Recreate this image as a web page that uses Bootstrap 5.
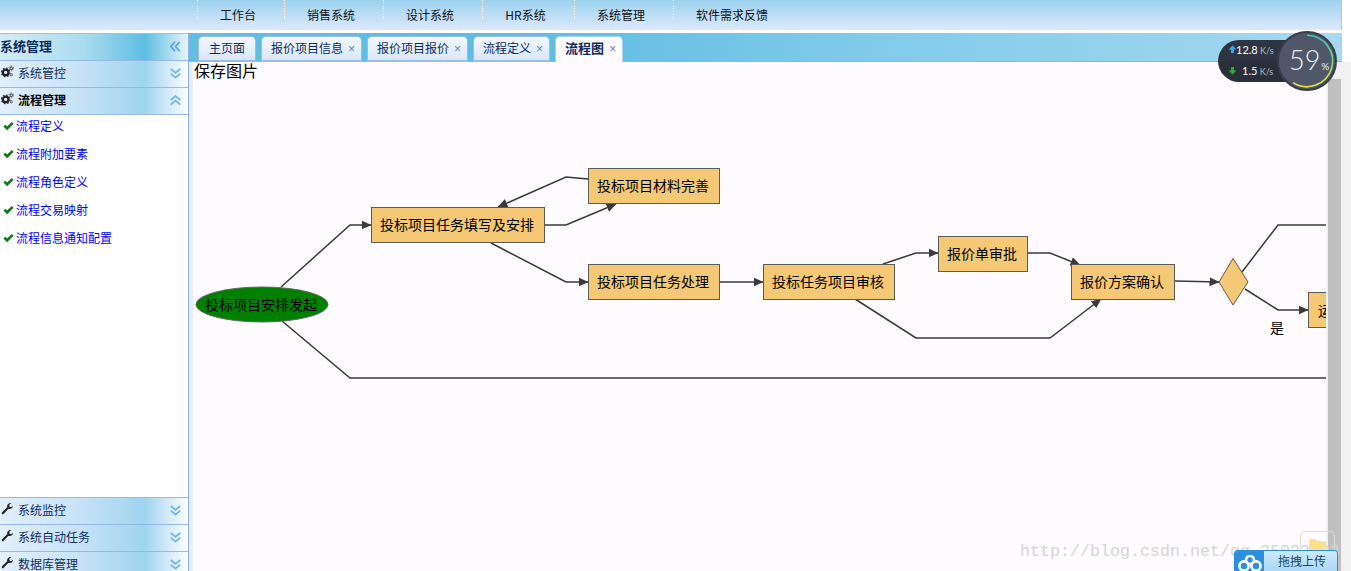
<!DOCTYPE html>
<html lang="zh">
<head>
<meta charset="utf-8">
<title>流程图</title>
<link href="https://cdn.jsdelivr.net/npm/bootstrap@5.3.0/dist/css/bootstrap.min.css" rel="stylesheet">
<style>
html,body{height:571px;overflow:hidden;background:#fff;margin:0}
body{position:relative;font-family:"Noto Sans CJK SC","Liberation Sans",sans-serif;font-size:12px;color:#0e2d5f}
.top-bar{width:1342px;height:30px;background:linear-gradient(#9cd2ef,#dce9fb);border-right:1px solid #a8c8ec;margin-bottom:3px;padding-left:197px}
.top-item{height:30px;color:#111;font-size:12px;line-height:30px;text-align:center;position:relative;padding-right:5px}
.top-item::before{content:"";position:absolute;left:0;top:0;height:19px;border-left:1px dotted #fff}
.shell{height:545px}
.side{width:189px;flex:none;border-right:1px solid #8db2e3;background:#fff}
.side-title{height:27px;padding-bottom:2px;font-weight:700;font-size:13px;color:#0e2d5f;background:linear-gradient(90deg,#d3ecf6 0,#a9dcef 45%,#5fbde2 77%,#a9dcef 90%,#e9f5fb 100%);border-top:1px solid #9dbfe9}
.side-head{height:27px;flex:none;padding-left:1px;padding-bottom:2px;color:#0e2d5f;background:linear-gradient(90deg,#e3effc 0,#c5e1f6 45%,#9fd4ee 77%,#d5ebf8 90%,#fbfdff 100%);border-top:1px solid #97b9e8;gap:4px}
.side-head.is-open{color:#000;font-weight:700;border-bottom:1px solid #97b9e8;height:28px}
.chev{margin-left:auto;margin-right:7px;flex:none}
.side-list{flex:1 1 auto;min-height:0;margin-top:-2px}
.side-list .list-group-item{border:0;padding:0 0 2px 3px;height:28px;color:#0000ff;background:transparent;font-size:12px;gap:2px}
.main-col{flex:1 1 auto;min-width:0;width:1153px}
.tab-strip{height:29px;padding-left:9px;padding-top:3px;gap:5px;background:linear-gradient(90deg,#62bde2 0,#5fbde2 30%,#82cbea 60%,#a6d8f1 100%);border-bottom:1px solid #8db2e3;flex-wrap:nowrap}
.tab-strip .nav-link{height:26px;padding:0 6px 0 9px;font-size:12px;line-height:22px;color:#0e2d5f;background:linear-gradient(#f4f8fe,#d9e7fa);border:1px solid #9bbce9;border-bottom-width:2px;border-radius:5px 5px 0 0;white-space:nowrap}
.tab-strip .nav-link.active{background:#fdfbfd;font-weight:700;font-size:13px;border-color:#a8d3ee;border-bottom:0;height:27px}
.tab-strip .nav-link.plain{padding:0 10px}
.tab-x{font-weight:400;color:#6480c0;margin-left:5px;font-family:"Liberation Sans",sans-serif;font-size:12px}
.gutter{width:4px;flex:none;background:#e6eff9}
.canvas-pane{width:1133px;flex:none;height:516px;background:#fdfbfd}
.save-line{height:18px;font-size:16px;line-height:16px;color:#000;padding-left:1px;white-space:nowrap}
.canvas-pane svg{display:block}
.node{fill:#f4c875;stroke:#5c5c50;stroke-width:1}
.edge{fill:none;stroke:#3a3a3a;stroke-width:1.5}
.ntext{font-size:14px;fill:#000;text-anchor:middle;font-family:"Noto Sans CJK SC",sans-serif}
.scroll-track{width:16px;flex:none;background:#f1f1f1;padding:17px 1px 0 2px;height:516px}
.scroll-thumb{height:100%;background:#c0c0c0}
.right-rest{width:9px;flex:none;background:#f1f1f1;height:516px}
.meter{position:absolute;left:1218px;top:31px;width:120px;height:60px}
.meter-pill{position:absolute;left:0;top:9px;width:90px;height:42px;border-radius:21px;background:linear-gradient(#2f3442 0,#2f3442 50%,#2a2e3a 50%,#2a2e3a 100%);color:#fff;font-family:"Lato",sans-serif;font-size:11px}
.meter-row{position:absolute;white-space:nowrap;line-height:14px}
.meter-row small{font-size:9px;color:#b5bac4}
.meter-pct{position:absolute;left:71px;top:12px;font-family:"Lato",sans-serif;font-weight:300;color:#eef0f4;font-size:27px;line-height:34px}
.meter-pct small{font-size:10px;font-weight:400;margin-left:1px}
.watermark{position:absolute;left:1020px;top:542px;font-family:"Liberation Mono",monospace;font-size:16.67px;line-height:20px;color:#d9d5d1;white-space:nowrap}
.folder-box{position:absolute;left:1300px;top:531px;width:35px;height:30px;border:1px solid #dcdcdc;border-radius:5px}
.upload{position:absolute;left:1234px;top:550px;width:104px;height:24px;border-radius:3px 3px 0 0;border:1px solid #2b8fdc;background:linear-gradient(#cfe9fb,#a6d6f5);overflow:hidden}
.upload-ic{width:29px;background:#2b8fdc;flex:none}
.upload-txt{font-size:12px;line-height:20px;color:#17466e;padding-left:14px}
</style>
</head>
<body>
<nav class="top-bar d-flex">
  <div class="top-item" style="width:87px">工作台</div>
  <div class="top-item" style="width:99px">销售系统</div>
  <div class="top-item" style="width:99px">设计系统</div>
  <div class="top-item" style="width:92px">HR系统</div>
  <div class="top-item" style="width:99px">系统管理</div>
  <div class="top-item" style="width:123px">软件需求反馈</div>
</nav>

<svg width="0" height="0" class="position-absolute">
  <defs>
    <symbol id="gears" viewBox="0 0 14 13">
      <circle cx="5" cy="7.5" r="3" fill="none" stroke="#222" stroke-width="2.4"/>
      <circle cx="5" cy="7.5" r="4.6" fill="none" stroke="#333" stroke-width="1.4" stroke-dasharray="1.8 1.8"/>
      <circle cx="11" cy="3" r="1.4" fill="none" stroke="#555" stroke-width="1.2"/>
      <circle cx="11" cy="3" r="2.6" fill="none" stroke="#666" stroke-width="1" stroke-dasharray="1.4 1.4"/>
      <circle cx="11" cy="10" r="1.2" fill="none" stroke="#777" stroke-width="1.2"/>
    </symbol>
    <symbol id="wrench" viewBox="0 0 13 13">
      <path d="M1 12 L2 12.6 L7.4 6.8 C9.5 7.6 11.6 6.4 12 3.8 L10 5.2 L8.4 4.4 L8.4 2.6 L10.4 1 C7.8 .6 5.6 2.8 6.2 5.2 L.8 10.6 Z" fill="#222"/>
    </symbol>
    <symbol id="check" viewBox="0 0 12 10">
      <path d="M0.5 5.5 L2.5 3.5 L4.5 5.5 L9.5 0.5 L11.5 2.5 L4.5 9.5 Z" fill="#0a7a14"/>
    </symbol>
    <symbol id="dbl-down" viewBox="0 0 11 11">
      <path d="M.8 1 L5.5 5 L10.2 1 M.8 5.6 L5.5 9.6 L10.2 5.6" fill="none" stroke="#6fb4ea" stroke-width="1.7"/>
    </symbol>
    <symbol id="dbl-up" viewBox="0 0 11 11">
      <path d="M.8 5 L5.5 1 L10.2 5 M.8 9.6 L5.5 5.6 L10.2 9.6" fill="none" stroke="#6fb4ea" stroke-width="1.7"/>
    </symbol>
    <symbol id="dbl-left" viewBox="0 0 11 11">
      <path d="M5 .8 L1 5.5 L5 10.2 M9.6 .8 L5.6 5.5 L9.6 10.2" fill="none" stroke="#5b9fe0" stroke-width="1.7"/>
    </symbol>
  </defs>
</svg>

<div class="shell d-flex">
  <aside class="side d-flex flex-column">
    <div class="side-title d-flex align-items-center">系统管理<svg class="chev" width="11" height="11"><use href="#dbl-left"/></svg></div>
    <div class="side-head d-flex align-items-center"><svg width="13" height="13" class="mb-1"><use href="#gears"/></svg>系统管控<svg class="chev" width="11" height="11"><use href="#dbl-down"/></svg></div>
    <div class="side-head is-open d-flex align-items-center"><svg width="13" height="13" class="mb-1"><use href="#gears"/></svg>流程管理<svg class="chev" width="11" height="11"><use href="#dbl-up"/></svg></div>
    <div class="side-list list-group list-group-flush">
      <div class="list-group-item d-flex align-items-center"><svg width="11" height="10"><use href="#check"/></svg>流程定义</div>
      <div class="list-group-item d-flex align-items-center"><svg width="11" height="10"><use href="#check"/></svg>流程附加要素</div>
      <div class="list-group-item d-flex align-items-center"><svg width="11" height="10"><use href="#check"/></svg>流程角色定义</div>
      <div class="list-group-item d-flex align-items-center"><svg width="11" height="10"><use href="#check"/></svg>流程交易映射</div>
      <div class="list-group-item d-flex align-items-center"><svg width="11" height="10"><use href="#check"/></svg>流程信息通知配置</div>
    </div>
    <div class="side-head d-flex align-items-center"><svg width="13" height="13" class="mb-1"><use href="#wrench"/></svg>系统监控<svg class="chev" width="11" height="11"><use href="#dbl-down"/></svg></div>
    <div class="side-head d-flex align-items-center"><svg width="13" height="13" class="mb-1"><use href="#wrench"/></svg>系统自动任务<svg class="chev" width="11" height="11"><use href="#dbl-down"/></svg></div>
    <div class="side-head d-flex align-items-center"><svg width="13" height="13" class="mb-1"><use href="#wrench"/></svg>数据库管理<svg class="chev" width="11" height="11"><use href="#dbl-down"/></svg></div>
  </aside>

  <main class="main-col d-flex flex-column">
    <div class="d-flex">
      <ul class="nav tab-strip" style="width:1153px">
        <li class="nav-item"><span class="nav-link plain">主页面</span></li>
        <li class="nav-item"><span class="nav-link">报价项目信息<span class="tab-x">×</span></span></li>
        <li class="nav-item"><span class="nav-link">报价项目报价<span class="tab-x">×</span></span></li>
        <li class="nav-item"><span class="nav-link">流程定义<span class="tab-x">×</span></span></li>
        <li class="nav-item"><span class="nav-link active">流程图<span class="tab-x">×</span></span></li>
      </ul>
    </div>
    <div class="d-flex">
      <div class="gutter"></div>
      <div class="canvas-pane">
        <div class="save-line">保存图片</div>
        <svg width="1133" height="498" viewBox="193 80 1133 498" role="img" aria-label="流程图">
          <defs>
            <marker id="arw" markerUnits="userSpaceOnUse" markerWidth="10" markerHeight="10" refX="9.5" refY="5" orient="auto">
              <path d="M0 .5 L10 5 L0 9.5 Z" fill="#3a3a3a"/>
            </marker>
          </defs>
          <polyline class="edge" marker-end="url(#arw)" points="281,287 350,225 371,225"/>
          <polyline class="edge" points="282,321 350,378 1326,378"/>
          <polyline class="edge" marker-end="url(#arw)" points="545,225 566,225 616,204"/>
          <polyline class="edge" marker-end="url(#arw)" points="588,179 566,177 498,207"/>
          <polyline class="edge" marker-end="url(#arw)" points="491,243 566,282 588,282"/>
          <polyline class="edge" marker-end="url(#arw)" points="720,282 763,282"/>
          <polyline class="edge" marker-end="url(#arw)" points="883,264 916,253 938,253"/>
          <polyline class="edge" marker-end="url(#arw)" points="1028,253 1050,253 1080,265"/>
          <polyline class="edge" marker-end="url(#arw)" points="855,299 916,338 1050,338 1101,299"/>
          <polyline class="edge" marker-end="url(#arw)" points="1175,281 1219,282"/>
          <polyline class="edge" points="1242,272 1278,225 1326,225"/>
          <polyline class="edge" marker-end="url(#arw)" points="1245,289 1278,310 1308,310"/>

          <ellipse cx="262" cy="304.5" rx="66" ry="17.5" fill="#008000" stroke="#666" stroke-width="1"/>
          <text class="ntext" x="261" y="309.5">投标项目安排发起</text>

          <rect class="node" x="371.5" y="207.5" width="173" height="35"/>
          <text class="ntext" x="457" y="230">投标项目任务填写及安排</text>
          <rect class="node" x="588.5" y="168.5" width="131" height="35"/>
          <text class="ntext" x="653" y="191">投标项目材料完善</text>
          <rect class="node" x="588.5" y="264.5" width="131" height="35"/>
          <text class="ntext" x="653" y="287">投标项目任务处理</text>
          <rect class="node" x="763.5" y="264.5" width="131" height="35"/>
          <text class="ntext" x="828" y="287">投标任务项目审核</text>
          <rect class="node" x="938.5" y="236.5" width="89" height="35"/>
          <text class="ntext" x="982" y="259">报价单审批</text>
          <rect class="node" x="1071.5" y="264.5" width="103" height="35"/>
          <text class="ntext" x="1122" y="287">报价方案确认</text>
          <polygon class="node" points="1233,258.5 1248,282 1233,305 1219,282"/>
          <rect class="node" x="1308.5" y="292.5" width="60" height="35"/>
          <text class="ntext" x="1325" y="316">运</text>
          <text class="ntext" x="1277" y="333">是</text>
        </svg>
      </div>
      <div class="scroll-track"><div class="scroll-thumb"></div></div>
    </div>
  </main>
  <div class="right-rest" style="margin-top:29px"></div>
</div>

<div class="watermark">http://blog.csdn.net/qq_25033003</div>

<div class="folder-box">
  <svg width="17" height="16" style="margin:6px 0 0 8px"><path d="M0 3 Q0 1 2 1 L6 1 L8 3 L15 3 Q17 3 17 5 L17 16 L0 16 Z" fill="#fde08a"/></svg>
</div>

<div class="upload d-flex">
  <div class="upload-ic d-flex justify-content-center pt-1">
    <svg width="26" height="17" viewBox="0 0 26 17"><g fill="none" stroke="#fff" stroke-width="2.6"><circle cx="7" cy="11" r="4.6"/><circle cx="19" cy="11" r="4.6"/><circle cx="13" cy="5" r="4"/></g></svg>
  </div>
  <div class="upload-txt">拖拽上传</div>
</div>

<div class="meter">
  <div class="meter-pill">
    <svg class="position-absolute" style="left:10px;top:5px" width="9" height="9" viewBox="0 0 9 9"><path d="M4.5 .5 L8.5 4.5 L6 4.5 L6 8 L3 8 L3 4.5 L.5 4.5 Z" fill="#38a8e8"/></svg>
    <span class="meter-row" style="left:18px;top:3px">12.8<small> K/s</small></span>
    <svg class="position-absolute" style="left:10px;top:26px" width="9" height="9" viewBox="0 0 9 9"><path d="M4.5 8.5 L8.5 4.5 L6 4.5 L6 1 L3 1 L3 4.5 L.5 4.5 Z" fill="#2ea83c"/></svg>
    <span class="meter-row" style="left:24px;top:24px">1.5<small> K/s</small></span>
  </div>
  <svg class="position-absolute" style="left:59px;top:0" width="60" height="60" viewBox="0 0 60 60">
    <defs>
      <linearGradient id="arcg" x1="0" y1="0" x2="0" y2="1">
        <stop offset="0" stop-color="#35d0c0"/><stop offset=".6" stop-color="#8bdc70"/><stop offset="1" stop-color="#f0e040"/>
      </linearGradient>
    </defs>
    <circle cx="30" cy="30" r="29" fill="#4f5768" stroke="#383d49" stroke-width="2"/>
    <path d="M30 4.3 A25.7 25.7 0 1 1 16 51.6" fill="none" stroke="url(#arcg)" stroke-width="1.6"/>
  </svg>
  <div class="meter-pct">59<small>%</small></div>
</div>
</body>
</html>
